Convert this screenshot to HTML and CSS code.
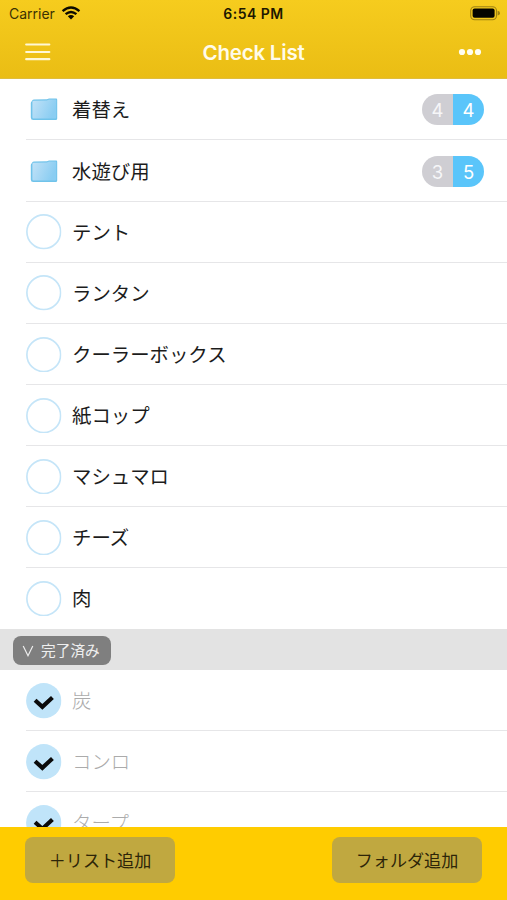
FILE: index.html
```html
<!DOCTYPE html>
<html lang="ja">
<head>
<meta charset="utf-8">
<title>Check List</title>
<link rel="stylesheet" href="styles.css">
</head>
<body>
<svg class="defs" width="0" height="0" aria-hidden="true">
  <defs>
    <linearGradient id="fold" x1="0" y1="0" x2="1" y2="0.35">
      <stop offset="0" stop-color="#c2e2f7"/><stop offset="1" stop-color="#8acdf2"/>
    </linearGradient>
    <symbol id="folder" viewBox="0 0 28 24">
      <path d="M2 3.2Q2 1.5 3.8 1.4L17 1.2 19 .6H26.2Q27.2.6 27.2 1.8V20.5Q27.2 22 25.7 22H3.2Q.8 22 .8 19.5V5Q.8 3.5 2 3.2Z" fill="#70c3ea"/>
      <path d="M2.4 4Q2.4 2.8 3.8 2.8L17 2.4 19 1.4H25.4Q26.3 1.4 26.3 2.3V19.3Q26.3 20.6 25 20.6H3.6Q2.4 20.6 2.4 19.3Z" fill="url(#fold)"/>
    </symbol>
    <symbol id="ring" viewBox="0 0 36 36">
      <circle cx="18" cy="18" r="17.1" fill="none" stroke="#c5e5f8" stroke-width="1.7"/>
    </symbol>
    <symbol id="check" viewBox="0 0 36 36">
      <circle cx="18" cy="18" r="17.9" fill="#c0e4f9"/>
      <path d="M9.2 17.4 16.6 24.2 26.8 14.6" fill="none" stroke="#0b0b0b" stroke-width="4.2"/>
    </symbol>
  </defs>
</svg>
<div class="app">
  <header class="header">
    <div class="status">
      <div class="carrier">Carrier
        <svg width="20" height="14" viewBox="0 0 20 14" fill="none" stroke="#0d0b00" stroke-width="2.4">
          <path d="M1.6 5.1Q10-2.1 18.4 5.1M4.6 8.2Q10 3.6 15.4 8.2"/><path d="M6.8 10.2Q10 7.6 13.2 10.2L10 13.4Z" fill="#0d0b00" stroke="none"/>
        </svg>
      </div>
      <div class="time">6:54 PM</div>
      <svg class="battery" width="31" height="15" viewBox="0 0 31 15">
        <rect x=".7" y=".7" width="25.8" height="13" rx="4" fill="none" stroke="#9e8213" stroke-width="1.1"/>
        <rect x="2.6" y="2.6" width="22" height="9.2" rx="2" fill="#050500"/>
        <path d="M27.6 4.8Q30 5.3 30 7.2T27.6 9.6Z" fill="#9e8213"/>
      </svg>
    </div>
    <div class="nav">
      <svg width="26" height="18" viewBox="0 0 26 18" stroke="#fff8d5" stroke-width="2.2" stroke-linecap="round"><path d="M1.2 1.5H24.3M1.2 9H24.3M1.2 16.2H24.3"/></svg>
      <h1>Check List</h1>
      <svg width="24" height="8" viewBox="0 0 24 8" fill="#fffdf0"><circle cx="4" cy="4" r="3.1"/><circle cx="12" cy="4" r="3.1"/><circle cx="20" cy="4" r="3.1"/></svg>
    </div>
  </header>
  <main class="list">
    <div class="row"><svg class="folder"><use href="#folder"/></svg><span>着替え</span><div class="count"><b>4</b><b>4</b></div></div>
    <div class="row"><svg class="folder"><use href="#folder"/></svg><span>水遊び用</span><div class="count"><b>3</b><b>5</b></div></div>
    <div class="row"><svg class="mark"><use href="#ring"/></svg><span>テント</span></div>
    <div class="row"><svg class="mark"><use href="#ring"/></svg><span>ランタン</span></div>
    <div class="row"><svg class="mark"><use href="#ring"/></svg><span>クーラーボックス</span></div>
    <div class="row"><svg class="mark"><use href="#ring"/></svg><span>紙コップ</span></div>
    <div class="row"><svg class="mark"><use href="#ring"/></svg><span>マシュマロ</span></div>
    <div class="row"><svg class="mark"><use href="#ring"/></svg><span>チーズ</span></div>
    <div class="row last"><svg class="mark"><use href="#ring"/></svg><span>肉</span></div>
    <div class="section">
      <div class="toggle"><svg width="12" height="12" viewBox="0 0 12 12" fill="none" stroke="#eee" stroke-width="1.2"><path d="M1.2 1 6 10.7 10.8 1"/></svg>完了済み</div>
    </div>
    <div class="row done"><svg class="mark"><use href="#check"/></svg><span>炭</span></div>
    <div class="row done"><svg class="mark"><use href="#check"/></svg><span>コンロ</span></div>
    <div class="row done"><svg class="mark"><use href="#check"/></svg><span>タープ</span></div>
  </main>
  <footer class="footer">
    <div class="button">＋リスト追加</div>
    <div class="button">フォルダ追加</div>
  </footer>
</div>
</body>
</html>
```
FILE: styles.css
```css
* { box-sizing: border-box; }
body {
  margin: 0;
  font-family: Inter, "Noto Sans CJK JP", sans-serif;
  color: #1c1c1c;
  background: #fff;
}
svg { display: block; flex: none; }
.defs { position: absolute; }
.app { height: 900px; display: flex; flex-direction: column; overflow: hidden; }
.header {
  flex: none;
  height: 79.4px;
  background: linear-gradient(#f6cc1e, #eabd14);
  border-bottom: 1px solid #dfbd3d;
}
.status {
  height: 27px;
  display: grid;
  grid-template-columns: 1fr auto 1fr;
  align-items: center;
  padding: 0 6px 0 9px;
}
.carrier { display: flex; align-items: center; gap: 6px; font-size: 14px; color: #3c3203; }
.carrier svg { margin-top: -2px; }
.time { margin-right: 3px; font-size: 14px; font-weight: 600; color: #1d1800; letter-spacing: 0.5px; }
.battery { justify-self: end; }
.nav {
  height: 50px;
  display: grid;
  grid-template-columns: 1fr auto 1fr;
  align-items: center;
  padding: 0 25px;
}
.nav svg:last-child { justify-self: end; }
h1 { margin: 1px 0 0; font-size: 20.5px; line-height: 24px; font-weight: 600; letter-spacing: -0.2px; color: #fffbea; }
.list { flex: 1; min-height: 0; overflow: hidden; }
.row {
  height: 61.1px;
  margin-left: 26px;
  padding: 1px 23px 0 0;
  display: flex;
  align-items: center;
  border-bottom: 1px solid #e6e6e8;
  font-size: 19.4px;
}
.row.last { border-bottom-color: transparent; }
.row span { margin: 1px 0 0 10.5px; line-height: 28px; }
.mark { width: 35.5px; height: 35.5px; }
.folder { width: 28px; height: 24px; margin: 1px 4px 0 3.5px; }
.done { color: #ababab; font-weight: 300; }
.count {
  margin-left: auto;
  display: flex;
  width: 62px;
  height: 31px;
  border-radius: 16px;
  overflow: hidden;
}
.count b { flex: 1; line-height: 32px; text-align: center; font-size: 18.5px; font-weight: 400; color: #f6f6f8; background: #cfced3; }
.count b + b { color: #fff; background: #5ac5fa; }
.section { height: 41px; padding: 7px 13px; background: #e3e3e3; }
.toggle {
  width: 98px;
  height: 29px;
  padding-left: 9px;
  display: flex;
  align-items: center;
  gap: 7px;
  border-radius: 8px;
  background: #7f7f7f;
  color: #efefef;
  font-size: 14.7px;
  line-height: 20px;
}
.footer {
  flex: none;
  height: 73.5px;
  padding: 10px 25px;
  display: flex;
  justify-content: space-between;
  background: #fc0;
}
.button {
  width: 150px;
  height: 46px;
  border-radius: 8px;
  background: #c0a840;
  text-align: center;
  font-size: 17.1px;
  line-height: 47px;
  color: #2d2508;
}
```
